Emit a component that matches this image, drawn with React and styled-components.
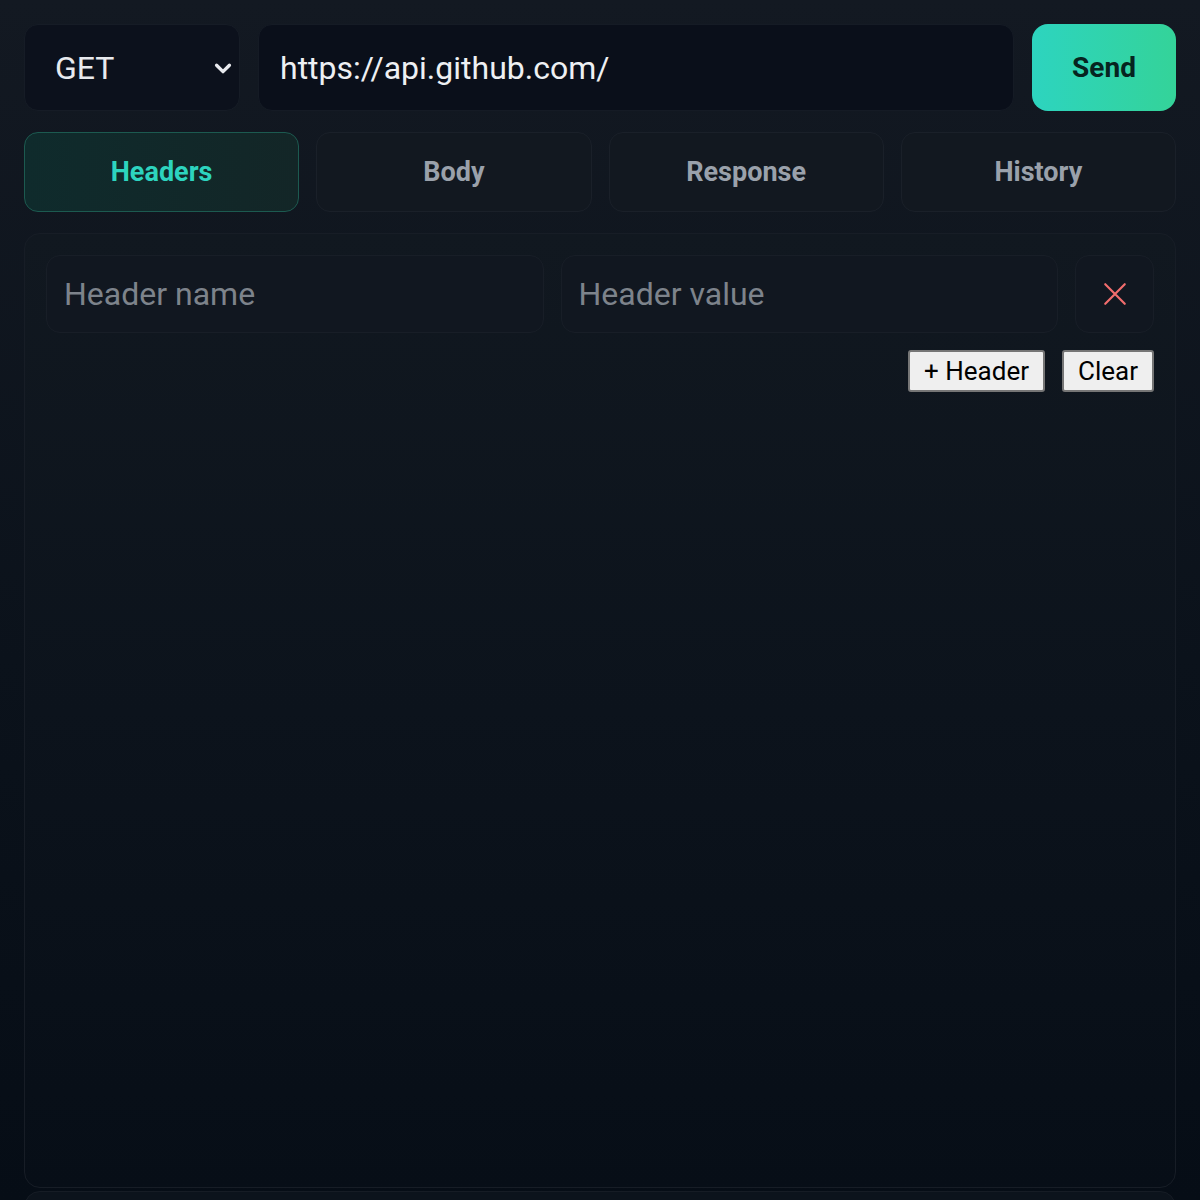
import { useState } from "react";
import styled, { createGlobalStyle } from "styled-components";

const GlobalStyle = createGlobalStyle`
  html, body {
    margin: 0;
    min-height: 100%;
    background: linear-gradient(180deg, #131922 0%, #0b121b 55%, #060d16 100%);
    font-family: Roboto, "Liberation Sans", sans-serif;
    color: #e5e7eb;
  }
  * { box-sizing: border-box; }
`;

const Page = styled.div`
  height: 1200px;
  overflow: hidden;
  padding: 24px;
  display: flex;
  flex-direction: column;

  & > * {
    flex-shrink: 0;
  }
`;

const RequestBar = styled.div`
  display: grid;
  grid-template-columns: 216px 1fr 144px;
  gap: 18px;
  height: 87px;
`;

const SelectWrap = styled.div`
  position: relative;

  svg {
    position: absolute;
    right: 6px;
    top: 50%;
    transform: translateY(-50%);
    pointer-events: none;
  }
`;

const MethodSelect = styled.select`
  appearance: none;
  width: 100%;
  height: 100%;
  padding: 0 0 0 30px;
  background: #0c111c;
  border: 1px solid #161c26;
  border-radius: 14px;
  color: #e8eaee;
  font-family: inherit;
  font-size: 32px;
  outline: none;
`;

const UrlInput = styled.input`
  height: 100%;
  padding: 0 21px;
  background: #0a0f1a;
  border: 1px solid #151b25;
  border-radius: 14px;
  color: #eef0f3;
  font-family: inherit;
  font-size: 32px;
  outline: none;
`;

const SendButton = styled.button`
  border: none;
  border-radius: 16px;
  background: linear-gradient(90deg, #2dd4bf 0%, #34d399 100%);
  color: #062420;
  font-family: inherit;
  font-size: 28px;
  font-weight: 700;
  cursor: pointer;
`;

const Tabs = styled.div`
  margin-top: 21px;
  display: grid;
  grid-template-columns: repeat(4, 1fr);
  gap: 17px;
  height: 80px;
`;

const Tab = styled.button`
  border-radius: 14px;
  border: 1px solid ${(p) => (p.$active ? "#1c5a50" : "#1a2029")};
  background: ${(p) =>
    p.$active
      ? "linear-gradient(90deg, #0f2b2c 0%, #132627 100%)"
      : "#121820"};
  color: ${(p) => (p.$active ? "#2dd4bf" : "#9aa1ab")};
  font-family: inherit;
  font-size: 27px;
  font-weight: 700;
  cursor: pointer;
`;

const Panel = styled.section`
  margin-top: 21px;
  height: 955px;
  padding: 21px;
  border: 1px solid #171d26;
  border-radius: 16px;
  background: linear-gradient(180deg, #111820 0%, #0c131c 50%, #070e17 100%);
`;

const NextPanel = styled.section`
  margin-top: 3px;
  height: 200px;
  border: 1px solid #161c25;
  border-radius: 16px;
  background: #0c131c;
`;

const HeaderRow = styled.div`
  display: grid;
  grid-template-columns: 1fr 1fr 79px;
  gap: 17px;
  height: 78px;
`;

const Field = styled.input`
  min-width: 0;
  padding: 0 17px;
  background: #111720;
  border: 1px solid #181e27;
  border-radius: 14px;
  color: #e5e7eb;
  font-family: inherit;
  font-size: 32px;
  outline: none;

  &::placeholder {
    color: #7d838b;
  }
`;

const RemoveButton = styled.button`
  display: flex;
  align-items: center;
  justify-content: center;
  background: #111720;
  border: 1px solid #181e27;
  border-radius: 14px;
  cursor: pointer;
`;

const Actions = styled.div`
  margin-top: 17px;
  display: flex;
  justify-content: flex-end;
  gap: 17px;
`;

const PlainButton = styled.button`
  height: 42px;
  padding: 0 14px;
  background: #efefef;
  border: 2px solid #767676;
  border-radius: 3px;
  color: #000;
  font-family: inherit;
  font-size: 26px;
  cursor: pointer;
`;

const Chevron = () => (
  <svg width="22" height="22" viewBox="0 0 24 24" fill="none">
    <path
      d="M5 9l7 7 7-7"
      stroke="#e8eaee"
      strokeWidth="3.6"
      strokeLinecap="round"
      strokeLinejoin="round"
    />
  </svg>
);

const CloseIcon = () => (
  <svg width="26" height="26" viewBox="0 0 24 24" fill="none">
    <path
      d="M3 3l18 18M21 3L3 21"
      stroke="#f26d6d"
      strokeWidth="2"
      strokeLinecap="round"
    />
  </svg>
);

const TABS = ["Headers", "Body", "Response", "History"];

const App = () => {
  const [tab, setTab] = useState("Headers");
  const [method, setMethod] = useState("GET");
  const [url, setUrl] = useState("https://api.github.com/");
  const [rows, setRows] = useState([{ name: "", value: "" }]);

  const updateRow = (i, key, val) => {
    setRows(rows.map((r, idx) => (idx === i ? { ...r, [key]: val } : r)));
  };

  return (
    <>
      <GlobalStyle />
      <Page>
        <RequestBar>
          <SelectWrap>
            <MethodSelect value={method} onChange={(e) => setMethod(e.target.value)}>
              <option>GET</option>
              <option>POST</option>
              <option>PUT</option>
              <option>PATCH</option>
              <option>DELETE</option>
            </MethodSelect>
            <Chevron />
          </SelectWrap>
          <UrlInput value={url} onChange={(e) => setUrl(e.target.value)} />
          <SendButton>Send</SendButton>
        </RequestBar>

        <Tabs>
          {TABS.map((t) => (
            <Tab key={t} $active={tab === t} onClick={() => setTab(t)}>
              {t}
            </Tab>
          ))}
        </Tabs>

        <Panel>
          {rows.map((row, i) => (
            <HeaderRow key={i}>
              <Field
                placeholder="Header name"
                value={row.name}
                onChange={(e) => updateRow(i, "name", e.target.value)}
              />
              <Field
                placeholder="Header value"
                value={row.value}
                onChange={(e) => updateRow(i, "value", e.target.value)}
              />
              <RemoveButton onClick={() => setRows(rows.filter((_, idx) => idx !== i))}>
                <CloseIcon />
              </RemoveButton>
            </HeaderRow>
          ))}
          <Actions>
            <PlainButton onClick={() => setRows([...rows, { name: "", value: "" }])}>
              + Header
            </PlainButton>
            <PlainButton onClick={() => setRows([{ name: "", value: "" }])}>Clear</PlainButton>
          </Actions>
        </Panel>
        <NextPanel />
      </Page>
    </>
  );
};

export default App;
